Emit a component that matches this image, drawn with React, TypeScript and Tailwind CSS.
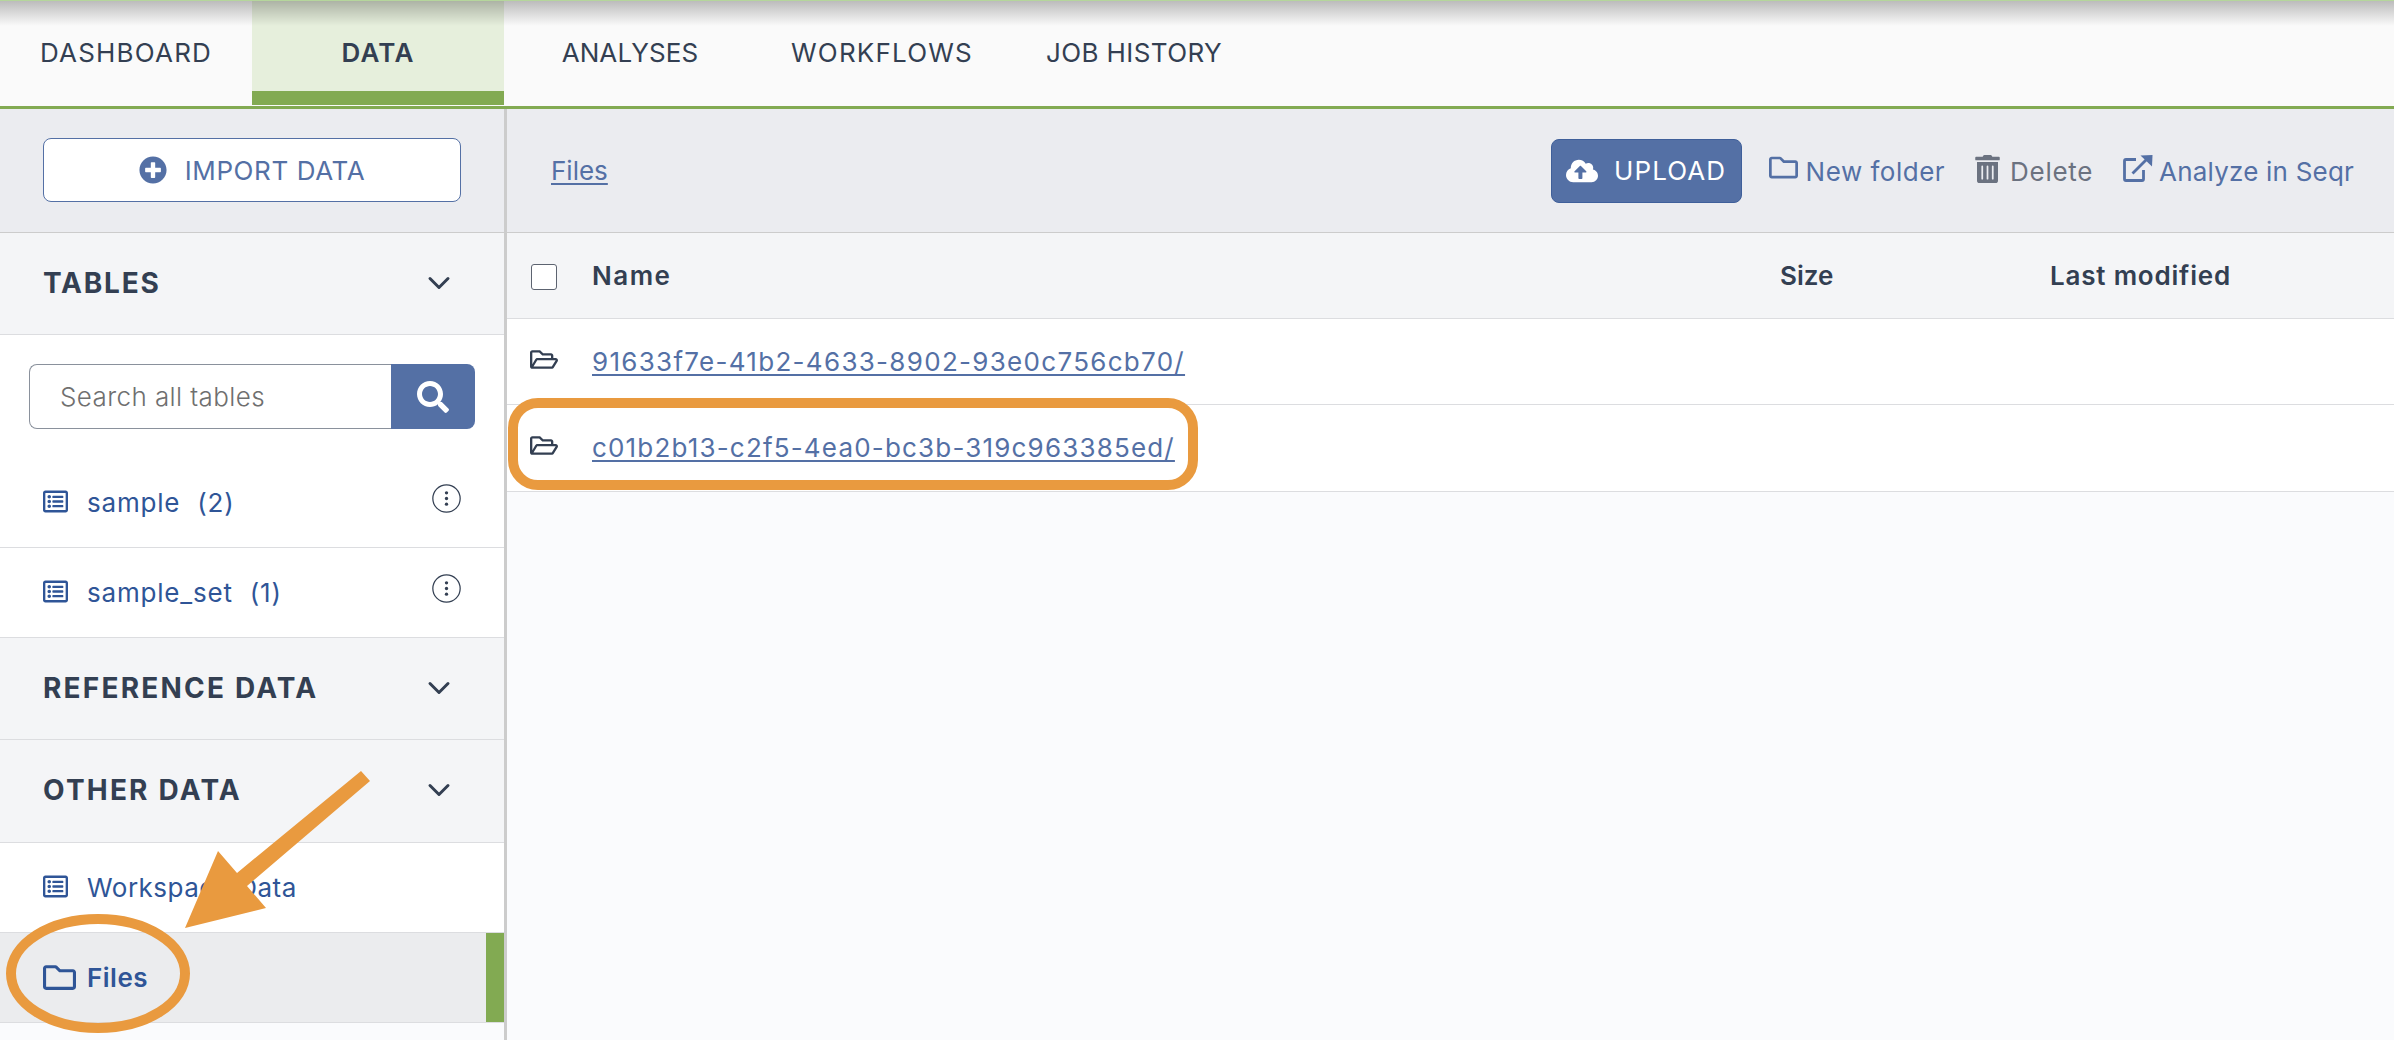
import React from "react";
import { FaCloudUploadAlt, FaPlusCircle, FaRegFolder, FaRegFolderOpen, FaRegListAlt, FaSearch, FaTrashAlt } from "react-icons/fa";
import { FiChevronDown } from "react-icons/fi";

const tabs = [
  { label: "DASHBOARD", tracking: "tracking-[1.2px]" },
  { label: "DATA", tracking: "tracking-[1.2px]" },
  { label: "ANALYSES", tracking: "tracking-[0.1px]" },
  { label: "WORKFLOWS", tracking: "tracking-[1.2px]" },
  { label: "JOB HISTORY", tracking: "tracking-[0.4px]" },
];

const SectionHeader = ({ title, className }: { title: string; className: string }) => (
  <div className={`flex items-center justify-between bg-[#f4f5f7] border-b border-[#dcdde0] pl-[43px] pr-[47px] ${className}`}>
    <span className="text-[28px] font-bold text-[#333f52] -mt-[2px]">{title}</span>
    <FiChevronDown className="w-[36px] h-[36px] text-[#333f52] -mt-[2px]" />
  </div>
);

const KebabIcon = () => (
  <svg viewBox="0 0 28 28" className="w-[29px] h-[29px] text-[#333f52]" fill="none">
    <circle cx="14" cy="14" r="13.2" stroke="currentColor" strokeWidth="1.2" />
    <circle cx="14" cy="8.5" r="1.6" fill="currentColor" />
    <circle cx="14" cy="14" r="1.6" fill="currentColor" />
    <circle cx="14" cy="19.5" r="1.6" fill="currentColor" />
  </svg>
);

const TableRow = ({ name, count }: { name: string; count: string }) => (
  <div className="h-[90px] flex items-center justify-between bg-white border-b border-[#dcdde0] pl-[43px] pr-[43px]">
    <div className="flex items-center text-[26px] text-[#2f5597] tracking-[0.8px]">
      <FaRegListAlt className="w-[25px] h-[25px] mr-[19px] -mt-[2px]" />
      <span>{name}</span>
      <span className="ml-[17px]">{count}</span>
    </div>
    <div className="-mt-[8px]">
      <KebabIcon />
    </div>
  </div>
);

const FileRow = ({ name, className }: { name: string; className: string }) => (
  <div className="h-full flex items-center bg-white border-b border-[#dcdde0] pb-[1px]">
    <div className="w-[85px] pl-[23px]">
      <FaRegFolderOpen className="w-[28px] h-[25px] text-[#333f52] -mt-[4px]" />
    </div>
    <a className={`text-[26px] text-[#5470a5] underline underline-offset-[3px] ${className}`}>{name}</a>
  </div>
);

export default function App() {
  return (
    <div className="relative w-[2394px] h-[1040px] overflow-hidden bg-[#fafbfd] font-['Inter',sans-serif]">
      <div className="relative flex h-[106px] bg-[#fafafa]">
        {tabs.map((tab) => (
          <div
            key={tab.label}
            className={`relative w-[252px] h-[105px] flex items-center justify-center text-[26px] text-[#333f52] ${tab.tracking} ${
              tab.label === "DATA" ? "bg-[#e6efdc] font-semibold" : ""
            }`}
          >
            {tab.label}
            {tab.label === "DATA" && <div className="absolute left-0 right-0 bottom-0 h-[14px] bg-[#82aa52]" />}
          </div>
        ))}
        <div className="absolute top-0 left-0 right-0 h-[26px] bg-gradient-to-b from-black/25 to-transparent border-t border-[#b5d69c]" />
      </div>
      <div className="h-[3px] bg-[#82aa52]" />

      <div className="flex h-[931px]">
        <div className="w-[507px] border-r-[3px] border-[#cccccc] flex flex-col">
          <div className="h-[124px] bg-[#ebecf0] border-b border-[#cccccc] pl-[43px] pt-[29px]">
            <button className="w-[418px] h-[64px] flex items-center justify-center bg-white border border-[#5470a5] rounded-[8px] text-[26px] text-[#5470a5] tracking-[0.6px]">
              <FaPlusCircle className="w-[28px] h-[28px] mr-[18px]" />
              IMPORT DATA
            </button>
          </div>

          <SectionHeader title="TABLES" className="h-[102px] tracking-[1.8px]" />
          <div className="bg-white h-[123px] pt-[29px] pl-[29px]">
            <div className="flex w-[446px] h-[65px]">
              <div className="flex-1 flex items-center border border-[#8a919c] border-r-0 rounded-l-[8px] pl-[30px] text-[26px] text-[#6f6f6f] font-light tracking-[0.4px]">
                Search all tables
              </div>
              <div className="w-[84px] flex items-center justify-center bg-[#5470a5] rounded-r-[8px]">
                <FaSearch className="w-[32px] h-[32px] text-white" />
              </div>
            </div>
          </div>
          <TableRow name="sample" count="(2)" />
          <TableRow name="sample_set" count="(1)" />

          <SectionHeader title="REFERENCE DATA" className="h-[102px] tracking-[2.2px]" />
          <SectionHeader title="OTHER DATA" className="h-[103px] tracking-[2.2px]" />

          <div className="h-[90px] flex items-center bg-white border-b border-[#dcdde0] pl-[43px] text-[26px] text-[#2f5597] tracking-[0.5px]">
            <FaRegListAlt className="w-[25px] h-[25px] mr-[19px] -mt-[2px]" />
            Workspace Data
          </div>
          <div className="relative h-[90px] flex items-center bg-[#ebecee] border-b border-[#dcdde0] pl-[43px] text-[26px] font-semibold tracking-[0.5px] text-[#2f5597]">
            <FaRegFolder className="w-[33px] h-[33px] mr-[11px]" />
            Files
            <div className="absolute top-0 bottom-0 right-0 w-[18px] bg-[#82aa52]" />
          </div>
        </div>

        <div className="flex-1 flex flex-col">
          <div className="h-[124px] flex items-center bg-[#ebecf0] border-b border-[#cccccc] pl-[44px] pr-[40px]">
            <a className="text-[26px] text-[#5470a5] underline underline-offset-[3px]">Files</a>
            <div className="ml-auto flex items-center text-[26px] text-[#5470a5]">
              <button className="w-[191px] h-[64px] flex items-center justify-center bg-[#5470a5] border border-[#3f5f9a] rounded-[8px] text-white tracking-[1.1px]">
                <FaCloudUploadAlt className="w-[32px] h-[32px] mr-[16px]" />
                UPLOAD
              </button>
              <FaRegFolder className="ml-[27px] w-[29px] h-[29px] -mt-[6px]" />
              <span className="ml-[8px] mt-[2px] tracking-[0.5px]">New folder</span>
              <FaTrashAlt className="ml-[30px] w-[25px] h-[28px] text-[#6b7280] -mt-[4px]" />
              <span className="ml-[10px] mt-[2px] text-[#6b7280] tracking-[0.7px]">Delete</span>
              <svg viewBox="0 0 30 28" className="ml-[30px] w-[30px] h-[28px] -mt-[4px]" fill="none" stroke="currentColor" strokeWidth="2.8">
                <path d="M13 4.5H3a1.5 1.5 0 0 0-1.5 1.5v18A1.5 1.5 0 0 0 3 25.5h16a1.5 1.5 0 0 0 1.5-1.5V15" />
                <path d="M9.5 18.5 24 4" />
                <path d="M17.5 0.5 29.5 0 29 11.5Z" fill="currentColor" stroke="none" />
              </svg>
              <span className="ml-[6px] mt-[2px] tracking-[0.2px]">Analyze in Seqr</span>
            </div>
          </div>

          <div className="h-[86px] grid grid-cols-[85px_1188px_270px_1fr] items-center bg-[#f4f5f7] border-b border-[#dcdde0] text-[26px] font-semibold tracking-[0.8px] text-[#333f52]">
            <div className="pl-[24px] mt-[2px]">
              <div className="w-[26px] h-[26px] border border-[#5c6370] rounded-[3px] bg-white" />
            </div>
            <span className="tracking-[1.5px]">Name</span>
            <span className="tracking-[0px]">Size</span>
            <span>Last modified</span>
          </div>
          <div className="h-[86px]">
            <FileRow name="91633f7e-41b2-4633-8902-93e0c756cb70/" className="tracking-[1.3px]" />
          </div>
          <div className="h-[87px]">
            <FileRow name="c01b2b13-c2f5-4ea0-bc3b-319c963385ed/" className="tracking-[1.18px]" />
          </div>
        </div>
      </div>

      {/* orange annotations drawn over the screenshot */}
      <div className="absolute left-[508px] top-[398px] w-[690px] h-[92px] border-[10px] border-[#e99a3f] rounded-[30px]" />
      <svg viewBox="0 0 2394 1040" className="absolute inset-0 w-[2394px] h-[1040px] pointer-events-none">
        <polygon points="361,771 370,781 247,886 266,908 185,928 218,851 237,873" fill="#e99a3f" />
        <ellipse cx="98" cy="973.5" rx="87" ry="54.5" fill="none" stroke="#e99a3f" strokeWidth="10" />
      </svg>
    </div>
  );
}
